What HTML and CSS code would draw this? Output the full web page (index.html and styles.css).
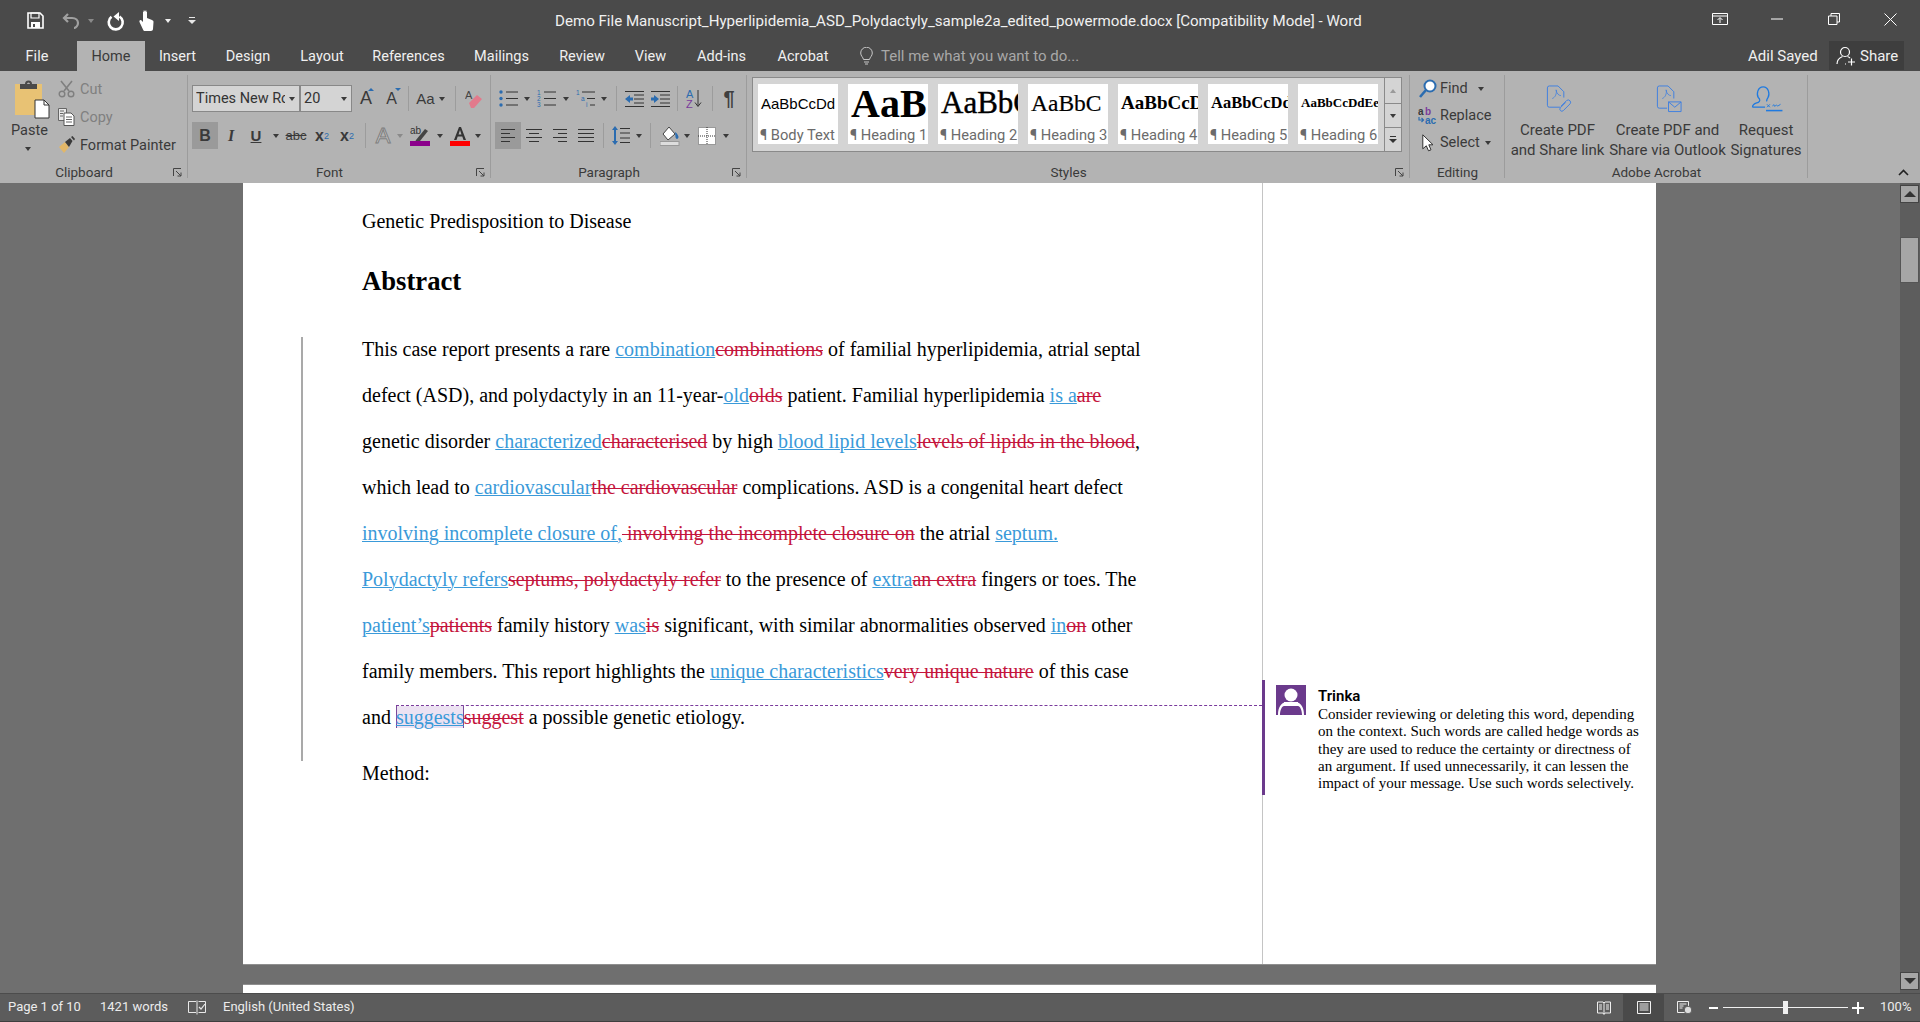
FILE: index.html
```html
<!DOCTYPE html>
<html lang="en">
<head>
<meta charset="utf-8">
<title>Word</title>
<link rel="stylesheet" href="styles.css">
</head>
<body>
<div class="app">
  <header class="titlebar">
    <div class="qat">
      <span class="cell"><svg width="17" height="17" viewBox="0 0 17 17"><path d="M1 1h12l3 3v12H1z" fill="none" stroke="#fff" stroke-width="1.6"/><path d="M4 1h8v5H4z" fill="none" stroke="#fff" stroke-width="1.2"/><path d="M4 10h9v6H4z" fill="#fff"/><path d="M6 12h2v3H6z" fill="#4a4a4a"/></svg></span>
      <span></span>
      <span class="cell"><svg width="18" height="17" viewBox="0 0 18 17"><path d="M6 2 2 6l4 4M2 6h8c4 0 6 2.500 6 5s-2 5-4 5" fill="none" stroke="#a0a0a0" stroke-width="2.200"/></svg></span>
      <span class="cell"><i class="caret dim"></i></span>
      <span class="cell"><svg width="18" height="20" viewBox="0 0 18 20"><path d="M12.500 5.500a7 7 0 1 1-8 .3" fill="none" stroke="#fff" stroke-width="2.600"/><path d="M12 1v9L6.500 5.500z" fill="#fff"/></svg></span>
      <span class="cell"><svg width="15" height="24" viewBox="0 0 15 24"><path d="M4 3a2 2 0 0 1 4 0v6l5 2c1 .5 1.500 1 1.500 2l-.5 7c0 1-1 2-2 2H6c-1 0-1.500-.5-2-1.500L.5 13c-.5-1.500 1-2.500 2-1.500L4 13z" fill="#fff"/><path d="M3 4.500a3 3 0 0 1 6 0" fill="none" stroke="#4a4a4a" stroke-width=".8"/></svg></span>
      <span class="cell"><i class="caret light"></i></span>
      <span class="cell"><svg width="8" height="9" viewBox="0 0 8 9"><path d="M1 1h6v1H1zM0 4h8L4 8z" fill="#e8e8e8"/></svg></span>
    </div>
    <div class="doc-title">Demo File Manuscript_Hyperlipidemia_ASD_Polydactyly_sample2a_edited_powermode.docx [Compatibility Mode] - Word</div>
    <div class="winctl">
      <span class="cell"><svg width="16" height="12" viewBox="0 0 16 12"><path d="M.5.500h15v11H.5zM.5 3h15" fill="none" stroke="#fff"/><path d="M8 10V5M5.500 7 8 4.500 10.500 7" fill="none" stroke="#fff"/></svg></span>
      <span class="cell"><svg width="12" height="2" viewBox="0 0 12 2"><path d="M0 1h12" stroke="#fff"/></svg></span>
      <span class="cell"><svg width="12" height="12" viewBox="0 0 12 12"><path d="M.5 3h8.500v8.500H.5zM3 3V.5h8.500V9H9" fill="none" stroke="#fff"/></svg></span>
      <span class="cell"><svg width="13" height="13" viewBox="0 0 13 13"><path d="m.5.500 12 12M12.500.500l-12 12" stroke="#fff"/></svg></span>
    </div>
  </header>

  <nav class="tabs">
    <span class="tab file">File</span>
    <span class="tab active">Home</span>
    <span class="tab">Insert</span>
    <span class="tab">Design</span>
    <span class="tab">Layout</span>
    <span class="tab">References</span>
    <span class="tab">Mailings</span>
    <span class="tab">Review</span>
    <span class="tab">View</span>
    <span class="tab">Add-ins</span>
    <span class="tab">Acrobat</span>
    <span class="cell bulb"><svg width="13" height="18" viewBox="0 0 13 18"><path d="M3.500 12.500C3 10 .7 9 .7 6a5.800 5.800 0 0 1 11.600 0c0 3-2.300 4-2.800 6.500zM4 15h5M5 17h3" fill="none" stroke="#c8c8c8"/></svg></span>
    <span class="tell">Tell me what you want to do...</span>
    <span class="user">Adil Sayed</span>
    <span class="share"><svg width="20" height="20" viewBox="0 0 20 20"><circle cx="9" cy="6" r="4.500" fill="none" stroke="#fff" stroke-width="1.200"/><path d="M1 18c0-4 3-6.500 5.500-7.500M11.500 10.500c1 .3 2 1 2.500 1.500M9 18h1M12 16h7M15.500 12.500v7" fill="none" stroke="#fff" stroke-width="1.200"/></svg><span>Share</span></span>
  </nav>

  <section class="ribbon">
    <div class="group g-clip launcher">
      <div class="clip-body">
        <div class="paste">
          <svg width="36" height="39" viewBox="0 0 36 39"><rect x="1" y="4" width="27" height="31" fill="#e8c274"/><path d="M6 4h17v5H6z" fill="#4a4a4a"/><path d="M11 4a3.500 3.500 0 0 1 7 0h-2a1.500 1.500 0 0 0-3 0z" fill="#4a4a4a"/><path d="M21 20h9l5 5v13H21z" fill="#fff" stroke="#333"/><path d="M30 20v5h5" fill="none" stroke="#333"/></svg>
          <span class="paste-label">Paste</span>
          <i class="caret"></i>
        </div>
        <div class="clip-list">
          <div class="clip-item off"><svg width="17" height="18" viewBox="0 0 17 18"><path d="M3 1l8 10M14 1 6 11" stroke="#7f7f7f" stroke-width="1.600" fill="none"/><circle cx="4" cy="14" r="2.800" fill="none" stroke="#7f7f7f" stroke-width="1.400"/><circle cx="13" cy="14" r="2.800" fill="none" stroke="#7f7f7f" stroke-width="1.400"/></svg><span>Cut</span></div>
          <div class="clip-item off"><svg width="17" height="18" viewBox="0 0 17 18"><path d="M.5.500h8v12h-8z" fill="#e8e8e8" stroke="#666"/><path d="M6 5h7l3 3v9.500H6z" fill="#fff" stroke="#555"/><path d="M8 9h6M8 11.500h6M8 14h6M2 3h4M2 5.500h3M2 8h3" stroke="#666"/></svg><span>Copy</span></div>
          <div class="clip-item"><svg width="17" height="18" viewBox="0 0 17 18"><path d="M1 11 7 6l4 5-5 6z" fill="#e2b768"/><path d="m7 6 5-4 2.500 3-3.500 6z" fill="#3a3a3a"/><path d="m13 1 1.500-1L17 3l-1 1.500z" fill="#3a3a3a"/></svg><span>Format Painter</span></div>
        </div>
      </div>
      <div class="group-label">Clipboard<svg class="launch" width="9" height="9" viewBox="0 0 9 9"><path d="M.5 8V.5H8M3 3l5 5M8 4.500V8H4.500" fill="none" stroke="#444"/></svg></div>
    </div>

    <div class="group g-font launcher">
      <div class="tools">
        <div class="row font-top">
          <div class="combo"><span class="combo-text">Times New Roman</span><i class="caret"></i></div>
          <div class="combo"><span class="combo-text">20</span><i class="caret"></i></div>
          <span class="cell glyph big">A<i class="mini up"></i></span>
          <span class="cell glyph mid">A<i class="mini down"></i></span>
          <span class="sep"></span>
          <span class="cell glyph aa">Aa</span>
          <span class="cell"><i class="caret"></i></span>
          <span class="sep"></span>
          <span class="cell"><svg width="18" height="22" viewBox="0 0 18 22"><text class="eraser-a" x="0" y="11">A</text><path d="m4 15 8-8 5 4-8 9H6z" fill="#e27a8c"/></svg></span>
        </div>
        <div class="row font-bottom">
          <span class="cell btn-on glyph bold">B</span>
          <span class="cell glyph ital">I</span>
          <span class="cell glyph under">U</span>
          <span class="cell"><i class="caret"></i></span>
          <span class="cell glyph strike">abc</span>
          <span class="cell glyph bold">x<sub class="blue-sub">2</sub></span>
          <span class="cell glyph bold">x<sup class="blue-sub">2</sup></span>
          <span class="sep"></span>
          <span class="cell glyph effect">A</span>
          <span class="cell"><i class="caret dim"></i></span>
          <span class="cell swatch"><svg width="20" height="20" viewBox="0 0 20 20"><text class="hl-ab" x="0" y="8">ab</text><path d="M6 14 15 3l3 2-8 10-5 1z" fill="#444"/><rect y="15" width="20" height="5" fill="#8b008b"/></svg></span>
          <span class="cell"><i class="caret"></i></span>
          <span class="cell swatch"><svg width="20" height="20" viewBox="0 0 20 20"><path d="M4 14 9 1h2l5 13h-2.500l-1.200-3.500H7.700L6.500 14zM8.500 8.500h3L10 4z" fill="#333" fill-rule="evenodd"/><rect y="15" width="20" height="5" fill="#f00"/></svg></span>
          <span class="cell"><i class="caret"></i></span>
        </div>
      </div>
      <div class="group-label">Font<svg class="launch" width="9" height="9" viewBox="0 0 9 9"><path d="M.5 8V.5H8M3 3l5 5M8 4.500V8H4.500" fill="none" stroke="#444"/></svg></div>
    </div>

    <div class="group g-para launcher">
      <div class="tools">
        <div class="row para-top">
          <span class="cell"><svg width="19" height="17" viewBox="0 0 19 17"><circle cx="2" cy="2" r="1.700" fill="#2b6cb0"/><circle cx="2" cy="8.500" r="1.700" fill="#2b6cb0"/><circle cx="2" cy="15" r="1.700" fill="#2b6cb0"/><path d="M7 2h12M7 8.500h12M7 15h12" stroke="#333"/></svg></span>
          <span class="cell"><i class="caret"></i></span>
          <span class="cell"><svg width="19" height="17" viewBox="0 0 19 17"><text class="nums" x="0" y="5">1</text><text class="nums" x="0" y="11">2</text><text class="nums" x="0" y="17">3</text><path d="M7 2h12M7 8.500h12M7 15h12" stroke="#333"/></svg></span>
          <span class="cell"><i class="caret"></i></span>
          <span class="cell"><svg width="19" height="17" viewBox="0 0 19 17"><text class="nums" x="0" y="5">1</text><text class="nums" x="5" y="11">a</text><text class="nums" x="10" y="17">i</text><path d="M6 2h13M11 8.500h8M14 15h5" stroke="#333"/></svg></span>
          <span class="cell"><i class="caret"></i></span>
          <span class="sep"></span>
          <span class="cell"><svg width="19" height="16" viewBox="0 0 19 16"><path d="M0 .5h19M9 4h10M9 8h10M9 12h10M0 15.500h19" stroke="#333"/><path d="M0 8l5-4v2.500h3v3H5V12z" fill="#2b6cb0"/></svg></span>
          <span class="cell"><svg width="19" height="16" viewBox="0 0 19 16"><path d="M0 .5h19M9 4h10M9 8h10M9 12h10M0 15.500h19" stroke="#333"/><path d="M8 8 3 4v2.500H0v3h3V12z" fill="#2b6cb0"/></svg></span>
          <span class="sep"></span>
          <span class="cell"><svg width="16" height="19" viewBox="0 0 16 19"><text class="sort-a" x="0" y="9">A</text><text class="sort-z" x="0" y="19">Z</text><path d="M12 1v16M9 13.500l3 4 3-4" fill="none" stroke="#333"/></svg></span>
          <span class="sep"></span>
          <span class="cell pilcrow">¶</span>
        </div>
        <div class="row para-bottom">
          <span class="cell btn-on"><svg width="14" height="13" viewBox="0 0 14 13"><path d="M0 .5h14M0 4.500h9M0 8.500h14M0 12.500h9" stroke="#333"/></svg></span>
          <span class="cell"><svg width="16" height="13" viewBox="0 0 16 13"><path d="M0 .5h16M3 4.500h10M0 8.500h16M3 12.500h10" stroke="#333"/></svg></span>
          <span class="cell"><svg width="14" height="13" viewBox="0 0 14 13"><path d="M0 .5h14M5 4.500h9M0 8.500h14M5 12.500h9" stroke="#333"/></svg></span>
          <span class="cell"><svg width="16" height="14" viewBox="0 0 16 14"><path d="M0 .5h16M0 4.500h16M0 8.500h16M0 12.500h16" stroke="#333"/></svg></span>
          <span class="sep"></span>
          <span class="cell"><svg width="18" height="19" viewBox="0 0 18 19"><path d="M3 0l3 4H4v11h2l-3 4-3-4h2V4H0z" fill="#2b6cb0"/><path d="M8 2.500h10M8 7h10M8 12h10M8 16.500h10" stroke="#333"/></svg></span>
          <span class="cell"><i class="caret"></i></span>
          <span class="sep"></span>
          <span class="cell"><svg width="20" height="20" viewBox="0 0 20 20"><path d="M9 1 3 8l5 6 7-6z" fill="#fff" stroke="#444"/><path d="M15 6c2 1 3.500 4 3.500 5 0 1-1 2-1.500 2s-1.500-1-1.500-2z" fill="#2b6cb0"/><rect y="15.500" width="19" height="4" fill="#ddd" stroke="#999"/></svg></span>
          <span class="cell"><i class="caret"></i></span>
          <span class="cell"><svg width="18" height="18" viewBox="0 0 18 18"><rect width="18" height="18" fill="#fff"/><path d="M.5.500h17v17H.5zM9 0v18M0 9h18" fill="none" stroke="#333" stroke-dasharray="1 1"/></svg></span>
          <span class="cell"><i class="caret"></i></span>
        </div>
      </div>
      <div class="group-label">Paragraph<svg class="launch" width="9" height="9" viewBox="0 0 9 9"><path d="M.5 8V.5H8M3 3l5 5M8 4.500V8H4.500" fill="none" stroke="#444"/></svg></div>
    </div>

    <div class="group g-styles launcher">
      <div class="gallery">
        <div class="style-list">
          <div class="style"><div class="preview p0">AaBbCcDd</div><div class="style-name">¶ Body Text</div></div>
          <div class="style"><div class="preview p1">AaB</div><div class="style-name">¶ Heading 1</div></div>
          <div class="style"><div class="preview p2">AaBbCc</div><div class="style-name">¶ Heading 2</div></div>
          <div class="style"><div class="preview p3">AaBbC</div><div class="style-name">¶ Heading 3</div></div>
          <div class="style"><div class="preview p4">AaBbCcDd</div><div class="style-name">¶ Heading 4</div></div>
          <div class="style"><div class="preview p5">AaBbCcDdEe</div><div class="style-name">¶ Heading 5</div></div>
          <div class="style"><div class="preview p6">AaBbCcDdEe</div><div class="style-name">¶ Heading 6</div></div>
        </div>
        <div class="gallery-scroll">
          <span class="cell"><i class="caret-up"></i></span>
          <span class="cell"><i class="caret"></i></span>
          <span class="cell"><svg width="8" height="8" viewBox="0 0 8 8"><path d="M1 0h6v1H1zM0 3h8L4 7z" fill="#333"/></svg></span>
        </div>
      </div>
      <div class="group-label">Styles<svg class="launch" width="9" height="9" viewBox="0 0 9 9"><path d="M.5 8V.5H8M3 3l5 5M8 4.500V8H4.500" fill="none" stroke="#444"/></svg></div>
    </div>

    <div class="group g-edit">
      <div class="edit-list">
        <div class="edit-item"><span class="cell"><svg width="18" height="19" viewBox="0 0 18 19"><circle cx="11" cy="7" r="5.500" fill="#fff" stroke="#2b6cb0" stroke-width="2"/><path d="M7 11l-6 7" stroke="#2b6cb0" stroke-width="2.600"/></svg></span><span>Find</span><i class="caret edit-caret-a"></i></div>
        <div class="edit-item"><span class="cell"><svg width="20" height="17" viewBox="0 0 20 17"><text class="rep-a" x="0" y="8">a</text><text class="rep-b" x="7" y="8">b</text><text class="rep-c" x="7" y="17">ac</text><path d="M1 10v3h4M3.500 11 5.500 13l-2 2" fill="none" stroke="#2b6cb0" stroke-width="1.200"/></svg></span><span>Replace</span></div>
        <div class="edit-item"><span class="cell"><svg width="12" height="18" viewBox="0 0 12 18"><path d="M.8.800v14l3.500-3 2.200 5 2.500-1-2.200-5H11z" fill="#fff" stroke="#333"/></svg></span><span>Select</span><i class="caret edit-caret-b"></i></div>
      </div>
      <div class="group-label">Editing</div>
    </div>

    <div class="group g-acro">
      <div class="acro-list">
        <div class="acro"><svg width="26" height="29" viewBox="0 0 26 29"><path d="M14 23H3a2 2 0 0 1-2-2V3a2 2 0 0 1 2-2h9l6 6v6" fill="none" stroke="#3f80e0"/><path d="M6 14c3-1 5-5 4-9 .5 4 3 6 5 6" fill="none" stroke="#3f80e0" stroke-width=".8"/><path d="m15 22 6-6a2.500 2.500 0 0 1 3.500 3.500l-7 7a2 2 0 0 1-3-3l5.500-5.500" fill="none" stroke="#3f80e0"/></svg><span>Create PDF<br>and Share link</span></div>
        <div class="acro"><svg width="26" height="29" viewBox="0 0 26 29"><path d="M11 24H3a2 2 0 0 1-2-2V3a2 2 0 0 1 2-2h9l6 6v7" fill="none" stroke="#3f80e0"/><path d="M6 14c3-1 5-5 4-9 .5 4 3 6 5 6" fill="none" stroke="#3f80e0" stroke-width=".8"/><path d="M12.500 17.500h13v10h-13zM12.500 17.500l6.500 5.500 6.500-5.500" fill="#b3b3b3" stroke="#3f80e0"/></svg><span>Create PDF and<br>Share via Outlook</span></div>
        <div class="acro"><svg width="32" height="29" viewBox="0 0 32 29"><path d="M1 23c0-4 4-4 6-5 2-1 2-3 0-5-2-3-1-11 5-11s7 8 5 11c-1 1.500-2 3-1 4M1 23h13" fill="none" stroke="#1f7ae0" stroke-width="1.300"/><path d="m16 20 3 3m0-3-3 3M22 22c1-3 2-1 2 0s1-2 2-1 1 1 4-1" fill="none" stroke="#1f7ae0"/><path d="M15 26.500h17" stroke="#1f7ae0" stroke-width="1.600"/></svg><span>Request<br>Signatures</span></div>
      </div>
      <div class="group-label">Adobe Acrobat</div>
    </div>
    <div class="collapse"><svg width="11" height="7" viewBox="0 0 11 7"><path d="m1 6 4.500-4.500L10 6" fill="none" stroke="#222" stroke-width="1.600"/></svg></div>
  </section>

  <main class="workspace">
    <div class="canvas">
      <article class="page">
        <div class="page-body">
          <p class="plain first">Genetic Predisposition to Disease</p>
          <h1 class="abstract">Abstract</h1>
          <div class="tracked">
            <div class="lines">
              <div class="line">This case report presents a rare <ins>combination</ins><del>combinations</del> of familial hyperlipidemia, atrial septal</div>
              <div class="line">defect (ASD), and polydactyly in an 11-year-<ins>old</ins><del>olds</del> patient. Familial hyperlipidemia <ins>is a</ins><del>are</del></div>
              <div class="line">genetic disorder <ins>characterized</ins><del>characterised</del> by high <ins>blood lipid levels</ins><del>levels of lipids in the blood</del>,</div>
              <div class="line">which lead to <ins>cardiovascular</ins><del>the cardiovascular</del> complications. ASD is a congenital heart defect</div>
              <div class="line"><ins>involving incomplete closure of,</ins><del> involving the incomplete closure on</del> the atrial <ins>septum.</ins></div>
              <div class="line"><ins>Polydactyly refers</ins><del>septums, polydactyly refer</del> to the presence of <ins>extra</ins><del>an extra</del> fingers or toes. The</div>
              <div class="line"><ins>patient’s</ins><del>patients</del> family history <ins>was</ins><del>is</del> significant, with similar abnormalities observed <ins>in</ins><del>on</del> other</div>
              <div class="line">family members. This report highlights the <ins>unique characteristics</ins><del>very unique nature</del> of this case</div>
              <div class="line">and <ins class="anchor">suggests</ins><del>suggest</del> a possible genetic etiology.</div>
            </div>
          </div>
          <p class="plain">Method:</p>
        </div>
        <aside class="markup">
          <div class="comment">
            <svg class="avatar" width="30" height="30" viewBox="0 0 30 30"><rect width="30" height="30" fill="#6b3a8c"/><circle cx="15" cy="10" r="6.500" fill="#fff"/><path d="M2 30c0-8 3-12 8-13q5 3 10 0c5 1 8 5 8 13h-2c0-5-2-9-4-9H8c-2 0-4 4-4 9z" fill="#fff"/><path d="M8 21h14v-4H8z" fill="#fff"/></svg>
            <div class="comment-text">
              <div class="comment-name">Trinka</div>
              <div class="comment-line">Consider reviewing or deleting this word, depending</div>
              <div class="comment-line">on the context. Such words are called hedge words as</div>
              <div class="comment-line">they are used to reduce the certainty or directness of</div>
              <div class="comment-line">an argument. If used unnecessarily, it can lessen the</div>
              <div class="comment-line">impact of your message. Use such words selectively.</div>
            </div>
          </div>
        </aside>
      </article>
      <article class="page next"></article>
    </div>
    <div class="scrollbar">
      <span class="sb-btn"><i class="caret-up dark"></i></span>
      <span class="sb-thumb"></span>
      <span class="sb-btn down"><i class="caret dark"></i></span>
    </div>
  </main>

  <footer class="status">
    <span>Page 1 of 10</span>
    <span>1421 words</span>
    <span class="cell start"><svg width="18" height="15" viewBox="0 0 18 15"><path d="M8 1.500H.5v11H8M9 .5v14M10.500 1.500h7v11h-7" fill="none" stroke="#e8e8e8"/><path d="m11 7 2 2 4-5" fill="none" stroke="#e8e8e8" stroke-width="1.200"/></svg></span>
    <span>English (United States)</span>
    <span class="cell"><svg width="14" height="14" viewBox="0 0 14 14"><path d="M.5 1h5.500l1 1 1-1h5.500v11H8l-1 1.500L6 12H.5zM7 2v11" fill="none" stroke="#eee"/><path d="M2 4h3M2 6h3M2 8h3M9 4h3M9 6h3M9 8h3" stroke="#eee"/></svg></span>
    <span class="cell view-on"><svg width="14" height="13" viewBox="0 0 14 13"><path d="M.5.500h13v12H.5zM2.500 3h9M2.500 5h9M2.500 7h9M2.500 9h9" fill="none" stroke="#f2f2f2"/></svg></span>
    <span class="cell"><svg width="15" height="13" viewBox="0 0 15 13"><path d="M.5.500h11v11H.5zM2.500 3h7M2.500 5h4M2.500 7h3" fill="none" stroke="#eee"/><circle cx="11" cy="9" r="3.800" fill="#ddd" stroke="#5c5c5c"/></svg></span>
    <span class="cell"><svg width="9" height="2" viewBox="0 0 9 2"><path d="M0 1h9" stroke="#fff" stroke-width="2"/></svg></span>
    <span class="slider"><i class="slider-thumb"></i></span>
    <span class="cell"><svg width="12" height="12" viewBox="0 0 12 12"><path d="M0 6h12M6 0v12" stroke="#fff" stroke-width="2"/></svg></span>
    <span class="zoom-pct">100%</span>
  </footer>
</div>
</body>
</html>
```

FILE: styles.css
```css
* { box-sizing: border-box; }
html, body { margin: 0; height: 100%; }
body {
  font-family: Roboto, "Open Sans", sans-serif;
  font-size: 14.5px;
  color: #3a3a3a;
  overflow: hidden;
}
.app { width: 1920px; height: 1022px; display: flex; flex-direction: column; overflow: hidden; }
.cell { display: flex; align-items: center; justify-content: center; }
.cell.start { justify-content: flex-start; }
i { display: block; font-style: normal; }
.caret { width: 0; height: 0; border-left: 3.500px solid transparent; border-right: 3.500px solid transparent; border-top: 4px solid #3a3a3a; }
.caret.dim { border-top-color: #8a8a8a; }
.caret.light { border-top-color: #f0f0f0; }
.caret.dark { border-left-width: 6px; border-right-width: 6px; border-top: 6px solid #333; }
.caret-up { width: 0; height: 0; border-left: 3.500px solid transparent; border-right: 3.500px solid transparent; border-bottom: 4px solid #9a9a9a; }
.caret-up.dark { border-left-width: 6px; border-right-width: 6px; border-bottom: 6px solid #333; }

/* title bar */
.titlebar { height: 41px; background: #4a4a4a; display: flex; align-items: stretch; color: #f0f0f0; flex: none; }
.qat { width: 555px; padding-left: 23px; display: grid; grid-template-columns: 24px 7px 34px 6px 44px 16px 28px 20px; align-content: stretch; }
.doc-title { line-height: 42px; white-space: nowrap; font-size: 15.100px; }
.winctl { margin-left: auto; margin-right: 1px; display: grid; grid-template-columns: repeat(4, 57px); }
.winctl .cell { padding-bottom: 3px; }

/* tabs */
.tabs { height: 30px; background: #4a4a4a; display: grid; grid-template-columns: 77px 68px 65px 76px 72px 101px 85px 76px 61px 81px 82px 37px 867px 81px 75px 16px; color: #f0f0f0; flex: none; }
.tab { display: flex; align-items: center; justify-content: center; font-size: 14.5px; padding-top: 1px; }
.tab.file { padding-right: 3px; }
.tab.active { background: #b3b3b3; color: #3a3a3a; }
.bulb { padding-left: 8px; }
.tell { display: flex; align-items: center; color: #a8a8a8; font-size: 15px; }
.user { display: flex; align-items: center; font-size: 15px; }
.share { display: flex; align-items: center; gap: 4px; background: #3e3e3e; padding-left: 7px; margin-bottom: 1px; font-size: 15px; }

/* ribbon */
.ribbon { height: 112px; background: #b3b3b3; display: flex; flex: none; position: relative; }
.group { position: relative; display: flex; flex-direction: column; height: 100%; }
.group::after { content: ""; position: absolute; right: 0; top: 4px; bottom: 5px; width: 1px; background: #9c9c9c; }
.g-clip { width: 188px; }
.g-font { width: 303px; }
.g-para { width: 256px; }
.g-styles { width: 663px; }
.g-edit { width: 95px; }
.g-acro { width: 303px; }
.group-label { margin-top: auto; margin-bottom: 1px; height: 20px; line-height: 20px; text-align: center; font-size: 13.500px; color: #3a3a3a; position: relative; }
.launcher .group-label { padding-right: 20px; }
.launch { position: absolute; right: 6px; top: 6px; }

.clip-body { display: flex; height: 91px; }
.paste { width: 58px; padding: 9px 0 0 14px; display: flex; flex-direction: column; }
.paste svg { display: block; }
.paste-label { width: 36px; margin: 2px 0 0 -3px; line-height: 20px; text-align: center; }
.paste .caret { margin: 6px 0 0 11px; }
.clip-list { padding-top: 4px; display: flex; flex-direction: column; }
.clip-item { height: 28px; display: flex; align-items: center; gap: 5px; white-space: nowrap; }
.clip-item.off { color: #808080; }

.tools { padding-top: 14px; display: flex; flex-direction: column; gap: 10px; height: 91px; }
.row { display: grid; height: 27px; }
.g-font .row { margin-left: 4px; }
.font-top { grid-template-columns: 108px 52px 28px 23px 10px 25px 8px 18px 20px; }
.font-bottom { grid-template-columns: 26px 26px 24px 16px 24px 28px 22px 14px 22px 12px 28px 12px 28px 8px; }
.para-top { margin-left: 5px; grid-template-columns: 25px 12px 27px 12px 27px 10px 14px 22px 30px 4px 30px 6px 28px; }
.para-bottom { margin-left: 4px; grid-template-columns: 26px 26px 26px 26px 8px 28px 8px 14px 26px 8px 31px 8px; }
.sep { position: relative; }
.sep::after { content: ""; position: absolute; left: 50%; top: 1px; bottom: 1px; width: 1px; background: #9c9c9c; }
.combo { background: #d4d4d4; border: 1px solid #888; display: flex; align-items: center; padding: 0 4px 0 3px; gap: 4px; overflow: hidden; }
.combo-text { flex: 1; overflow: hidden; white-space: nowrap; font-size: 14.500px; color: #333; }
.btn-on { background: #9a9a9a; }
.glyph { color: #3a3a3a; position: relative; font-family: "Liberation Sans", sans-serif; }
.big { font-size: 18px; }
.mid { font-size: 16px; }
.mini { position: absolute; top: 3px; right: 3px; width: 0; height: 0; border-left: 3px solid transparent; border-right: 3px solid transparent; }
.mini.up { border-bottom: 3px solid #2b6cb0; right: 6px; }
.mini.down { border-top: 3px solid #2b6cb0; right: 2px; }
.aa { font-size: 15px; }
.bold { font-size: 16px; font-weight: 700; }
.ital { font-size: 16px; font-weight: 700; font-style: italic; font-family: "Liberation Serif", serif; }
.under { font-size: 15px; font-weight: 700; text-decoration: underline; }
.strike { font-size: 13px; text-decoration: line-through; }
.blue-sub { font-size: 9px; font-weight: 400; color: #2b6cb0; line-height: 0; }
.effect { font-size: 22px; color: #c8c8c8; -webkit-text-stroke: 1px #7e7e7e; }
.swatch svg { display: block; }
.eraser-a { font: 11px "Liberation Sans", sans-serif; fill: #444; }
.hl-ab { font: 10px "Liberation Sans", sans-serif; fill: #333; }
.nums { font: 6.500px "Liberation Sans", sans-serif; fill: #2b6cb0; }
.sort-a { font: 11px "Liberation Sans", sans-serif; fill: #2b6cb0; }
.sort-z { font: 11px "Liberation Sans", sans-serif; fill: #7a3b9c; }
.pilcrow { font: 700 20px "Liberation Sans", sans-serif; color: #3f3f3f; }

.gallery { margin: 6px 0 0 5px; width: 650px; height: 75px; display: flex; background: #d4d4d4; border: 1px solid #8a8a8a; }
.style-list { flex: 1; display: flex; gap: 10px; padding: 6px 0 0 5px; }
.style { width: 80px; height: 60px; background: #fff; overflow: hidden; white-space: nowrap; display: flex; flex-direction: column; }
.preview { height: 38px; display: flex; align-items: center; color: #000; font-family: "Liberation Serif", serif; font-weight: 700; padding-left: 3px; flex: none; }
.style-name { height: 22px; line-height: 26px; font-size: 14.700px; color: #6b6b6b; padding-left: 2px; }
.p0 { font: 15px "Liberation Sans", sans-serif; }
.p1 { font-size: 40px; }
.p2 { font-size: 31px; font-weight: 400; -webkit-text-stroke: .4px #000; }
.p3 { font-size: 23.500px; font-weight: 400; -webkit-text-stroke: .2px #000; }
.p4 { font-size: 19px; }
.p5 { font-size: 16.500px; }
.p6 { font-size: 13px; }
.gallery-scroll { width: 17px; border-left: 1px solid #8a8a8a; display: grid; grid-template-rows: 25px 24px 1fr; }
.gallery-scroll .cell + .cell { border-top: 1px solid #8a8a8a; }

.edit-list { padding-top: 4px; height: 91px; }
.edit-item { height: 27px; display: flex; align-items: center; white-space: nowrap; position: relative; }
.edit-item .cell { width: 30px; padding-left: 5px; }
.edit-caret-a { margin-left: 10px; }
.edit-caret-b { margin-left: 5px; }
.rep-a { font: 700 10px "Liberation Sans", sans-serif; fill: #3a3a3a; }
.rep-b { font: 700 10px "Liberation Sans", sans-serif; fill: #7a3b9c; }
.rep-c { font: 700 10px "Liberation Sans", sans-serif; fill: #2b6cb0; }

.acro-list { height: 91px; padding: 14px 0 0 4px; display: grid; grid-template-columns: 97px 123px 74px; }
.acro { display: flex; flex-direction: column; align-items: center; text-align: center; white-space: nowrap; line-height: 20px; font-size: 15px; }
.acro svg { height: 28px; margin-bottom: 7px; flex: none; position: relative; left: 1px; }
.collapse { position: absolute; right: 11px; bottom: 7px; line-height: 0; }

/* workspace */
.workspace { flex: 1; min-height: 0; display: flex; background: #6f6f6f; }
.canvas { flex: 1; min-width: 0; overflow: hidden; padding-left: 243px; }
.page { width: 1413px; height: 782px; background: #fff; border-bottom: 1px solid #8f8f8f; display: flex; }
.page.next { margin-top: 19px; border-top: 1px solid #8f8f8f; }
.page-body { width: 1019px; padding-top: 26px; font: 20px "Liberation Serif", serif; color: #000; }
.plain { margin: 0 0 0 119px; line-height: 24px; }
.abstract { margin: 32px 0 40px 119px; font-size: 26.670px; line-height: 32px; font-weight: 700; }
.tracked { display: flow-root; margin-left: 58px; padding-left: 59px; border-left: 2px solid #a9a9a9; height: 424px; }
.lines { margin-top: -11px; }
.line { height: 46px; line-height: 46px; white-space: pre; }
ins { color: #3a9ad9; text-decoration: underline 1px; }
del { color: #c4143c; text-decoration: line-through 1px; }
.anchor { position: relative; background: #ece2f2; box-shadow: inset 1px 0 #7a4a9a, inset -1px 0 #7a4a9a; }
.anchor::after { content: ""; position: absolute; left: 0; top: -1px; width: 866px; border-top: 1px dashed #7a3b9c; }
.markup { flex: 1; border-left: 1px solid #c4c4c4; padding-top: 497px; }
.comment { height: 115px; margin-left: -1px; border-left: 3px solid #6b3a8c; display: flex; padding: 5px 0 0 11px; }
.avatar { flex: none; display: block; }
.comment-text { margin: 1px 0 0 12px; font: 15px/17.300px "Liberation Serif", serif; color: #000; white-space: nowrap; }
.comment-name { font: 600 15px/20px Roboto, sans-serif; }

/* scrollbar */
.scrollbar { width: 20px; background: #5d5d5d; display: flex; flex-direction: column; padding: 2px 1px 3px 0; }
.sb-btn { height: 18px; background: #a6a6a6; border: 1px solid #444; display: flex; align-items: center; justify-content: center; flex: none; }
.sb-thumb { height: 46px; margin-top: 34px; background: #a6a6a6; border: 1px solid #555; }
.sb-btn.down { margin-top: auto; }

/* status bar */
.status { height: 29px; flex: none; background: #5c5c5c; border-top: 1px solid #4c4c4c; border-bottom: 1px solid #3e3e3e; padding-left: 8px; display: grid; grid-template-columns: 92px 88px 35px 1362px 38px 41px 40px 19px 125px 20px 1fr; align-items: stretch; font-size: 13px; color: #ececec; }
.status > span:not(.cell) { display: flex; align-items: center; white-space: nowrap; padding-bottom: 2px; }
.view-on { background: #4a4a4a; }
.slider { position: relative; }
.slider::before { content: ""; position: absolute; left: 0; right: 0; top: 13px; height: 1px; background: #f0f0f0; }
.slider-thumb { position: absolute; left: 60px; top: 7px; width: 5px; height: 13px; background: #f0f0f0; }
.zoom-pct { padding-left: 12px; font-size: 13px; }
```
